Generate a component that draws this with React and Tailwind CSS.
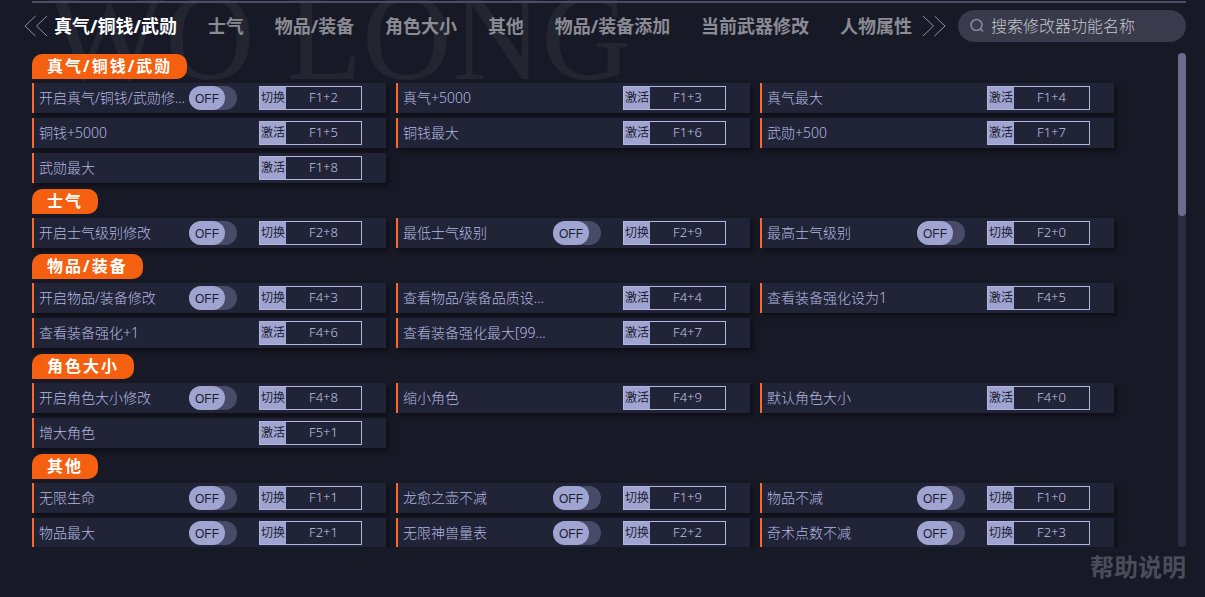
import { useState } from 'react';

const tabs = [
  '真气/铜钱/武勋',
  '士气',
  '物品/装备',
  '角色大小',
  '其他',
  '物品/装备添加',
  '当前武器修改',
  '人物属性',
];

// toggle: true -> 切换 (on/off), otherwise 激活 (one shot)
const sections = [
  {
    title: '真气/铜钱/武勋',
    items: [
      { label: '开启真气/铜钱/武勋修...', hotkey: 'F1+2', toggle: true },
      { label: '真气+5000', hotkey: 'F1+3' },
      { label: '真气最大', hotkey: 'F1+4' },
      { label: '铜钱+5000', hotkey: 'F1+5' },
      { label: '铜钱最大', hotkey: 'F1+6' },
      { label: '武勋+500', hotkey: 'F1+7' },
      { label: '武勋最大', hotkey: 'F1+8' },
    ],
  },
  {
    title: '士气',
    items: [
      { label: '开启士气级别修改', hotkey: 'F2+8', toggle: true },
      { label: '最低士气级别', hotkey: 'F2+9', toggle: true },
      { label: '最高士气级别', hotkey: 'F2+0', toggle: true },
    ],
  },
  {
    title: '物品/装备',
    items: [
      { label: '开启物品/装备修改', hotkey: 'F4+3', toggle: true },
      { label: '查看物品/装备品质设...', hotkey: 'F4+4' },
      { label: '查看装备强化设为1', hotkey: 'F4+5' },
      { label: '查看装备强化+1', hotkey: 'F4+6' },
      { label: '查看装备强化最大[99...', hotkey: 'F4+7' },
    ],
  },
  {
    title: '角色大小',
    items: [
      { label: '开启角色大小修改', hotkey: 'F4+8', toggle: true },
      { label: '缩小角色', hotkey: 'F4+9' },
      { label: '默认角色大小', hotkey: 'F4+0' },
      { label: '增大角色', hotkey: 'F5+1' },
    ],
  },
  {
    title: '其他',
    items: [
      { label: '无限生命', hotkey: 'F1+1', toggle: true },
      { label: '龙愈之壶不减', hotkey: 'F1+9', toggle: true },
      { label: '物品不减', hotkey: 'F1+0', toggle: true },
      { label: '物品最大', hotkey: 'F2+1', toggle: true },
      { label: '无限神兽量表', hotkey: 'F2+2', toggle: true },
      { label: '奇术点数不减', hotkey: 'F2+3', toggle: true },
    ],
  },
];

const ChevronsIcon = ({ flip }) => (
  <svg
    viewBox="0 0 24 22"
    className={flip ? 'h-[22px] w-6 rotate-180' : 'h-[22px] w-6'}
    fill="none"
    stroke="#8f909b"
    strokeWidth="1"
  >
    <path d="M11.5 1 1 11l10.500 10M23 1 12.500 11 23 21" />
  </svg>
);

const SearchIcon = () => (
  <svg viewBox="0 0 16 16" className="h-4 w-4 shrink-0" fill="none" stroke="#8a8a9c" strokeWidth="1.5">
    <circle cx="7.500" cy="7" r="5.500" />
    <path d="m11.500 11 2.500 2.500" />
  </svg>
);

const Toggle = ({ label }) => {
  const [on, setOn] = useState(false);
  return (
    <label className="flex h-6 w-12 shrink-0 cursor-pointer rounded-full bg-[#474b68]">
      <input
        type="checkbox"
        className="sr-only"
        aria-label={label}
        checked={on}
        onChange={() => setOn(!on)}
      />
      <span
        className={
          on
            ? 'ml-auto flex h-6 w-9 items-center justify-center rounded-full bg-[#f4600f] pt-px font-["Liberation_Sans",sans-serif] text-xs text-white'
            : 'flex h-6 w-9 items-center justify-center rounded-full bg-[#a0a4d0] pt-px font-["Liberation_Sans",sans-serif] text-xs text-[#1c1e30]'
        }
      >
        {on ? 'ON' : 'OFF'}
      </span>
    </label>
  );
};

const CheatCard = ({ label, hotkey, toggle }) => (
  <div className="flex h-[30px] items-center border-l-2 border-[#fb6a2c] bg-[#212336] pr-6 pl-[5px] shadow-[3px_3px_5px_rgba(0,0,0,0.45)]">
    <span className="min-w-0 flex-1 text-sm font-light whitespace-nowrap text-[#b4b8e0]">{label}</span>
    {toggle && <Toggle label={label} />}
    <button
      type="button"
      className="ml-[22px] flex h-6 w-[103px] shrink-0 cursor-pointer items-stretch border border-[#b3b7e0]"
    >
      <span className="flex w-[26px] items-center justify-center bg-[#a0a4d0] text-xs whitespace-nowrap text-[#1c1e30]">
        {toggle ? '切换' : '激活'}
      </span>
      <span className="flex flex-1 items-center justify-center text-[13px] font-light text-[#c0c3e4]">
        {hotkey}
      </span>
    </button>
  </div>
);

const Section = ({ title, items }) => (
  <section className="flex flex-col items-start gap-1">
    <h2 className="flex h-[25px] items-center rounded-t-[10px] rounded-br-[10px] bg-[#f4600f] px-[15px] pb-px text-base font-bold tracking-[2px] text-white">
      {title}
    </h2>
    <div className="grid w-full grid-cols-3 gap-x-[10px] gap-y-[5px]">
      {items.map((item) => (
        <CheatCard key={item.label} {...item} />
      ))}
    </div>
  </section>
);

export default function App() {
  const [activeTab, setActiveTab] = useState(tabs[0]);

  return (
    <div className='relative flex h-screen flex-col overflow-hidden bg-[#171926] pr-[19px] font-["Noto_Sans","Noto_Sans_CJK_SC",sans-serif]'>
      {/* faded game title behind the panel */}
      <div
        aria-hidden="true"
        className='absolute -top-6 left-12 flex gap-8 font-["Liberation_Serif",serif] text-[124px] leading-none whitespace-nowrap text-white/5 select-none'
      >
        <span>WO</span>
        <span>LONG</span>
      </div>

      <header className="relative flex flex-col">
        <div className="mt-px ml-8 h-[2px] bg-[#4b4c66]" />
        <div className="flex items-center pt-[7px] pl-6">
          <button type="button" aria-label="向左" className="mr-1.5 cursor-pointer">
            <ChevronsIcon />
          </button>
          <nav className="flex flex-1 justify-between">
            {tabs.map((tab) => (
              <button
                key={tab}
                type="button"
                onClick={() => setActiveTab(tab)}
                className={
                  tab === activeTab
                    ? 'cursor-pointer text-lg font-bold whitespace-nowrap text-white'
                    : 'cursor-pointer text-lg font-bold whitespace-nowrap text-[#8b8b93]'
                }
              >
                {tab}
              </button>
            ))}
          </nav>
          <button type="button" aria-label="向右" className="mr-3 ml-[10px] cursor-pointer">
            <ChevronsIcon flip />
          </button>
          <label className="flex h-8 w-[228px] items-center gap-1.5 rounded-full bg-[#393a4b] pr-4 pl-[11px]">
            <SearchIcon />
            <input
              type="text"
              aria-label="搜索"
              placeholder="搜索修改器功能名称"
              className="w-full min-w-0 bg-transparent text-base font-light text-[#d0d0d6] outline-none placeholder:text-[#c6c6cc]"
            />
          </label>
        </div>
      </header>

      <main className="relative mt-[11px] flex min-h-0 flex-1 pl-8">
        <div className="flex min-w-0 flex-1 flex-col gap-1.5 overflow-hidden pt-px pr-16">
          {sections.map((section) => (
            <Section key={section.title} {...section} />
          ))}
        </div>
        <div className="w-2 shrink-0 rounded-full bg-[#2b2d40]">
          <div className="h-[33%] rounded-full bg-[#6a6c8e]" />
        </div>
      </main>

      <footer className="relative flex h-[50px] justify-end">
        <a href="#help" className="pt-1 text-2xl font-bold text-[#4b4c59]">
          帮助说明
        </a>
      </footer>
    </div>
  );
}
